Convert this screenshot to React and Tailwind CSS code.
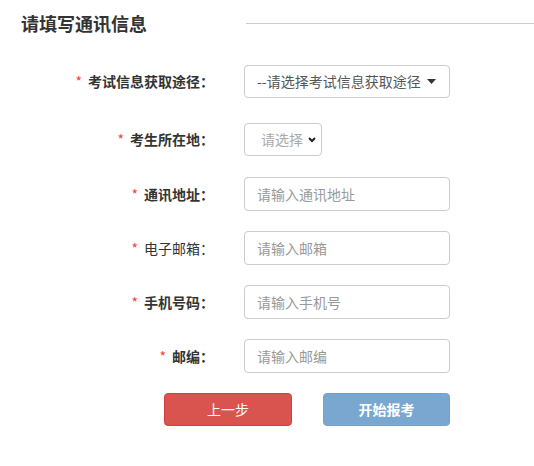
import React from "react";

const font = { fontFamily: '"Microsoft YaHei", "Noto Sans CJK SC", "Noto Sans", sans-serif' };

function Label({ text, bold = true }) {
  return (
    <div className={`w-[214px] shrink-0 text-right text-[14px] text-[#333] ${bold ? "font-bold" : "font-normal"}`}>
      <span className="text-[#f0453f] font-normal mr-[6px]">*</span>
      {text}
    </div>
  );
}

function Input({ placeholder }) {
  return (
    <input
      placeholder={placeholder}
      className="ml-[30px] w-[206px] h-[34px] border border-[#ccc] rounded-[4px] pl-[12px] text-[14px] text-[#555] placeholder:text-[#999] outline-none"
      style={font}
    />
  );
}

export default function App() {
  return (
    <div className="w-[534px] h-[466px] bg-white overflow-hidden" style={font}>
      <div className="flex items-center pt-[11px] h-[35px]">
        <div className="pl-[21px] text-[18px] leading-[24px] font-bold text-[#333] whitespace-nowrap">请填写通讯信息</div>
        <div className="ml-[99px] flex-1 h-px bg-[#ccc]" />
      </div>

      <div className="flex items-center mt-[30px] h-[33px]">
        <Label text="考试信息获取途径：" />
        <div className="ml-[30px] w-[206px] h-[33px] border border-[#ccc] rounded-[4px] relative flex items-center pl-[12px] text-[14px] text-[#555] overflow-hidden whitespace-nowrap">
          --请选择考试信息获取途径
          <svg className="absolute left-[182px] top-[13px]" width="9" height="5" viewBox="0 0 9 5">
            <path d="M0 0 L9 0 L4.5 5 Z" fill="#333" />
          </svg>
        </div>
      </div>

      <div className="flex items-center mt-[25px] h-[33px]">
        <Label text="考生所在地：" />
        <div className="ml-[30px] w-[78px] h-[33px] border border-[#ccc] rounded-[4px] flex items-center pl-[16px] text-[14px] text-[#aaa] whitespace-nowrap">
          请选择
          <svg className="ml-[5px]" width="8" height="6" viewBox="0 0 8 6">
            <path d="M1 1 L4 4 L7 1" fill="none" stroke="#222" strokeWidth="2" />
          </svg>
        </div>
      </div>

      <div className="flex items-center mt-[21px]">
        <Label text="通讯地址：" />
        <Input placeholder="请输入通讯地址" />
      </div>
      <div className="flex items-center mt-[20px]">
        <Label text="电子邮箱：" bold={false} />
        <Input placeholder="请输入邮箱" />
      </div>
      <div className="flex items-center mt-[20px]">
        <Label text="手机号码：" />
        <Input placeholder="请输入手机号" />
      </div>
      <div className="flex items-center mt-[20px]">
        <Label text="邮编：" />
        <Input placeholder="请输入邮编" />
      </div>

      <div className="flex mt-[20px] ml-[164px] gap-[31px]">
        <button className="w-[128px] h-[33px] rounded-[4px] bg-[#d9534f] border border-[#d43f3a] text-white text-[14px]">
          上一步
        </button>
        <button className="w-[127px] h-[33px] rounded-[4px] bg-[#7aa7cf] border border-[#74a2cc] text-white text-[14px] font-bold">
          开始报考
        </button>
      </div>
    </div>
  );
}
